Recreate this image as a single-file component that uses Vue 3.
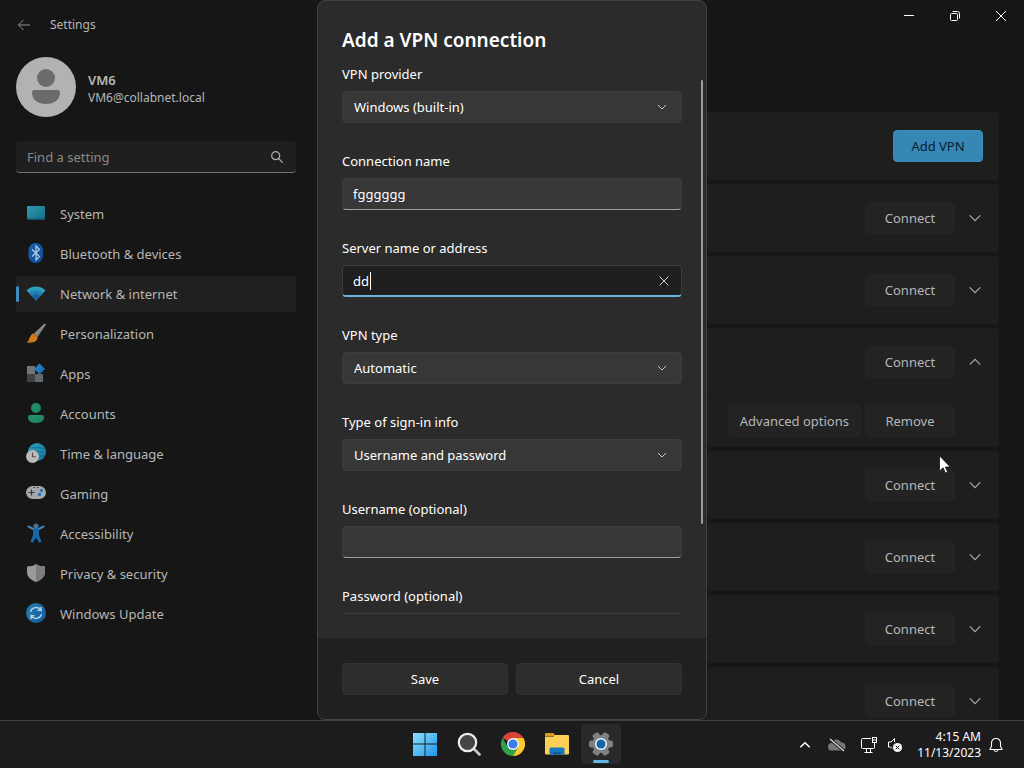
<template>
  <div class="desktop">
    <div class="window">
      <aside class="sidebar">
        <header class="titlebar">
          <button class="back" aria-label="Back">
            <svg width="14" height="14" viewBox="0 0 14 14" fill="none" stroke="#8f8f8f">
              <path d="M6.500 2 1.500 7l5 5M1.500 7H13" />
            </svg>
          </button>
          <span>Settings</span>
        </header>

        <div class="account">
          <svg width="60" height="60" viewBox="0 0 60 60">
            <circle cx="30" cy="30" r="30" fill="#b2b2b2" />
            <circle cx="30" cy="21" r="9" fill="#6b6b6b" />
            <path d="M18.500 33h23q2.500 0 2.500 2.500C44 43 38 47 30 47s-14-4-14-11.500q0-2.500 2.500-2.500z" fill="#6b6b6b" />
          </svg>
          <div>
            <div class="account-name">VM6</div>
            <div class="account-mail">VM6@collabnet.local</div>
          </div>
        </div>

        <div class="search">
          <input v-model="search" type="text" placeholder="Find a setting" aria-label="Find a setting" />
          <svg width="12" height="12" viewBox="0 0 12 12" fill="none" stroke="#b0b0b0" stroke-width="1.200">
            <circle cx="4.700" cy="4.700" r="4" />
            <path d="m7.700 7.700 4 4" />
          </svg>
        </div>

        <nav>
          <a
            v-for="item in navItems"
            :key="item.id"
            href="#"
            class="nav-item"
            :class="{ active: item.id === current }"
            @click.prevent="current = item.id"
          >
            <svg class="nav-icon" width="20" height="20" viewBox="0 0 20 20">
              <defs>
                <linearGradient :id="'g-' + item.id" x1="0" y1="0" x2="1" y2="1">
                  <stop offset="0" :stop-color="item.from" />
                  <stop offset="1" :stop-color="item.to" />
                </linearGradient>
              </defs>
              <g v-if="item.id === 'system'">
                <rect x="1" y="3" width="18" height="14" rx="1" fill="url(#g-system)" />
                <path d="M1 15.500h18V17H1z" fill="#15546b" />
              </g>
              <g v-else-if="item.id === 'bluetooth'">
                <rect x="2.500" y="0" width="14.500" height="20" rx="7.200" fill="url(#g-bluetooth)" />
                <path d="m6 6.500 7.500 7L10 17V3l3.500 3.500-7.500 7" fill="none" stroke="#b9cfe4" stroke-width="1.200" />
              </g>
              <g v-else-if="item.id === 'network'">
                <path d="M0.500 7.500C5 2 15 2 19.500 7.500L10 17.500z" fill="#2d9fbd" />
                <path d="M3.200 10C7 6.200 13 6.200 16.800 10L10 17.500z" fill="#237fb0" />
                <path d="M6 13c2.500-2.200 5.500-2.200 8 0l-4 4.500z" fill="#1a60a4" />
              </g>
              <g v-else-if="item.id === 'personalization'">
                <path d="M18.500 0.500 20 1.500 11.500 14 7.500 11z" fill="url(#g-personalization)" />
                <path d="M7 10.500 11.500 14c.5 4.500-4.500 6.500-11 5.500 2.500-1 2-3 3.500-5.500 1-2 1.500-3 3-3.500z" fill="#cf7a1c" />
              </g>
              <g v-else-if="item.id === 'apps'">
                <path d="M1 3h8v8H1z" fill="#747474" />
                <path d="M1 11h8v8H1z" fill="#3f4347" />
                <path d="M9 11h8v8H9z" fill="#63676b" />
                <path d="m13.500 0.500 5.500 5.500-5.500 5.500L8 6z" fill="url(#g-apps)" />
              </g>
              <g v-else-if="item.id === 'accounts'">
                <circle cx="10" cy="5" r="5" fill="url(#g-accounts)" />
                <path d="M4.500 12h11q2.500 0 2.500 2.300C18 18 15 20 10 20s-8-2-8-5.700Q2 12 4.500 12z" fill="url(#g-accounts)" />
              </g>
              <g v-else-if="item.id === 'time'">
                <circle cx="11" cy="9" r="9" fill="url(#g-time)" />
                <path d="M5 4.500c4 1 8-1 14 1.500M3 8c6-1 10 2 16.500 1M12 12.500c3 1 4 0 6 0" fill="none" stroke="#176c91" stroke-width="1" />
                <circle cx="6.500" cy="13.500" r="6.500" fill="#b8babb" />
                <path d="M6.500 9.500v4.300h3.200" fill="none" stroke="#604846" stroke-width="1.100" />
              </g>
              <g v-else-if="item.id === 'gaming'">
                <rect x="0" y="3" width="20" height="13" rx="6.500" fill="#a5a8ad" />
                <path d="M2.500 9.500h6M5.500 6.500v6" stroke="#35383d" stroke-width="1.200" />
                <circle cx="15.500" cy="7.500" r="1.700" fill="#2c74b5" />
                <circle cx="13.500" cy="11.500" r="1.700" fill="#2c74b5" />
                <path d="M7.500 4.500H9M11 4.500h1.500" stroke="#35383d" />
              </g>
              <g v-else-if="item.id === 'accessibility'">
                <circle cx="10" cy="3" r="2.600" fill="#4d6f8c" />
                <path d="M2.500 3.500 8 6.500h4l5.500-3" fill="none" stroke="#3f83b8" stroke-width="2" stroke-linecap="round" />
                <path d="M7 6h6v6l2.500 6.500-2.300 1.300L10 14.500l-3.200 5.300-2.300-1.300L7 12z" fill="#1668aa" />
              </g>
              <g v-else-if="item.id === 'privacy'">
                <path d="M10 1c2.500 1.800 5.500 2.500 9 2.500V9c0 5-4 8-9 10-5-2-9-5-9-10V3.500C4.500 3.500 7.500 2.800 10 1z" fill="#9a9a9a" />
                <path d="M10 1c2.500 1.800 5.500 2.500 9 2.500V9c0 5-4 8-9 10z" fill="#7d7d7d" />
              </g>
              <g v-else>
                <circle cx="10" cy="10" r="10" fill="url(#g-update)" />
                <path d="M4.500 9c1-5 8-6 10.500-2V4M15 7.300h-3.500M15.500 11c-1 5-8 6-10.500 2v3M5 12.700h3.500" fill="none" stroke="#b5d5e8" stroke-width="1.400" />
              </g>
            </svg>
            {{ item.label }}
          </a>
        </nav>
      </aside>

      <main class="content">
        <section class="card">
          <div class="card-row">
            <button class="btn accent">Add VPN</button>
          </div>
        </section>
        <section v-for="vpn in connections" :key="vpn.id" class="card">
          <div class="card-row">
            <button class="btn">Connect</button>
            <button
              class="expander"
              :class="{ open: vpn.open }"
              :aria-expanded="vpn.open"
              aria-label="Details"
              @click="vpn.open = !vpn.open"
            >
              <svg width="12" height="12" viewBox="0 0 12 12" fill="none" stroke="#a8a8a8" stroke-width="1.200">
                <path d="m0.700 3.300 5.300 5.300 5.300-5.300" />
              </svg>
            </button>
          </div>
          <div v-if="vpn.open" class="card-details">
            <button class="btn">Advanced options</button>
            <button class="btn">Remove</button>
          </div>
        </section>
      </main>

      <div class="captions">
        <button aria-label="Minimize">
          <svg width="12" height="12" viewBox="0 0 12 12" fill="none" stroke="#fff"><path d="M1 5.500h10" /></svg>
        </button>
        <button aria-label="Restore">
          <svg width="12" height="12" viewBox="0 0 12 12" fill="none" stroke="#fff">
            <rect x="1.500" y="3.500" width="7" height="7" rx="1" />
            <path d="M3.500 1.500h5q2 0 2 2v5" />
          </svg>
        </button>
        <button aria-label="Close">
          <svg width="12" height="12" viewBox="0 0 12 12" fill="none" stroke="#fff"><path d="m1 1 10 10M11 1 1 11" /></svg>
        </button>
      </div>

      <form class="dialog" role="dialog" aria-labelledby="dialog-title" @submit.prevent>
        <h1 id="dialog-title">Add a VPN connection</h1>
        <div class="dialog-body">
          <div v-for="field in fields" :key="field.id" class="field">
            <label :for="field.id">{{ field.label }}</label>
            <div class="control">
              <template v-if="field.options">
                <select :id="field.id" v-model="field.value">
                  <option v-for="option in field.options" :key="option">{{ option }}</option>
                </select>
                <svg class="chevron" width="10" height="10" viewBox="0 0 10 10" fill="none" stroke="#c8c8c8">
                  <path d="m1 3 4 4 4-4" />
                </svg>
              </template>
              <template v-else>
                <input
                  :id="field.id"
                  v-model="field.value"
                  :type="field.type || 'text'"
                  :class="{ focused: field.id === focused }"
                  autocomplete="off"
                />
                <template v-if="field.id === focused">
                  <span class="caret"></span>
                  <button type="button" class="clear" aria-label="Clear" @click="field.value = ''">
                    <svg width="10" height="10" viewBox="0 0 10 10" fill="none" stroke="#d0d0d0">
                      <path d="m0.500 0.500 9 9M9.500 0.500l-9 9" />
                    </svg>
                  </button>
                </template>
              </template>
            </div>
          </div>
        </div>
        <span class="scroll-thumb"></span>
        <footer>
          <button type="submit">Save</button>
          <button type="button">Cancel</button>
        </footer>
      </form>
    </div>

    <div class="taskbar">
      <div class="apps">
        <button aria-label="Start">
          <svg width="24" height="24" viewBox="0 0 24 24">
            <defs>
              <linearGradient id="start" x1="0" y1="0" x2="24" y2="24" gradientUnits="userSpaceOnUse">
                <stop offset="0" stop-color="#8fe3fb" />
                <stop offset="1" stop-color="#1e96ea" />
              </linearGradient>
            </defs>
            <path d="M0 1h11.500v10.500H0zM12.500 1H24v10.500H12.500zM0 12.500h11.500V24H0zM12.500 12.500H24V24H12.500z" fill="url(#start)" />
          </svg>
        </button>
        <button aria-label="Search">
          <svg width="24" height="24" viewBox="0 0 24 24" fill="none">
            <path d="m17.500 17.500 5 5" stroke="#c9c9c9" stroke-width="2.600" stroke-linecap="round" />
            <circle cx="10.500" cy="10.500" r="8.700" fill="#454545" stroke="#ededed" stroke-width="2.200" />
          </svg>
        </button>
        <button aria-label="Chrome">
          <svg width="24" height="24" viewBox="0 0 24 24">
            <path d="M12 12 1.600 6A12 12 0 0 1 22.400 6z" fill="#dc4437" />
            <path d="M6.800 15 1.600 6A12 12 0 0 0 12 24l5.200-9z" fill="#2da14c" />
            <path d="M12 6h10.400a12 12 0 0 1-10.400 18l5.200-9z" fill="#fccb2f" />
            <circle cx="12" cy="12" r="6" fill="#f4f7fb" />
            <circle cx="12" cy="12" r="4.600" fill="#3b7ded" />
          </svg>
        </button>
        <button aria-label="File Explorer">
          <svg width="24" height="24" viewBox="0 0 24 24">
            <path d="M0 2q0-1 1-1h7.500l2.500 3H0z" fill="#d99a22" />
            <path d="M0 4.500 8.500 4.500 10.500 3H23q1 0 1 1v17.500q0 1-1 1H1q-1 0-1-1z" fill="#fbd054" />
            <path d="M4.500 22.500V17q0-1.500 1.500-1.500h12q1.500 0 1.500 1.500v5.500z" fill="#1877c5" />
            <path d="M8 22.500V20.300h8v2.200z" fill="#0d5796" />
          </svg>
        </button>
        <button class="running" aria-label="Settings">
          <svg width="24" height="24" viewBox="0 0 24 24">
            <g fill="#7d8286">
              <rect v-for="n in 3" :key="n" x="8.500" y="0" width="7" height="24" rx="2" :transform="`rotate(${n * 60 - 30} 12 12)`" />
              <circle cx="12" cy="12" r="9" />
            </g>
            <circle cx="12" cy="12" r="6" fill="#eef4f9" />
            <circle cx="12" cy="12" r="4.500" fill="#1663ab" />
          </svg>
        </button>
      </div>
      <div class="tray">
        <button aria-label="Show hidden icons">
          <svg width="12" height="12" viewBox="0 0 12 12" fill="none" stroke="#fff" stroke-width="1.500"><path d="m1.300 8.300 4.700-4.600 4.700 4.600" /></svg>
        </button>
        <button class="cloud" aria-label="OneDrive">
          <svg width="18" height="14" viewBox="0 0 18 14">
            <path d="M4 12.500A3.700 3.700 0 0 1 3.700 5 5 5 0 0 1 13 4.500a4 4 0 0 1 1 8z" fill="#777" />
            <path d="m2 1 14 12" stroke="#1c1c1c" stroke-width="3" />
            <path d="m2 1 14 12" stroke="#e0e0e0" stroke-width="1.200" />
          </svg>
        </button>
        <button aria-label="Network">
          <svg width="18" height="18" viewBox="0 0 18 18" fill="none" stroke="#fff">
            <path d="M11 2.500H2.500q-1 0-1 1v8q0 1 1 1h11q1 0 1-1V9M6.500 12.500v3.500M10.500 12.500v3.500M4.500 16.500h8" />
            <rect x="12.500" y="1.500" width="4" height="5" />
            <path d="M14.500 6.500v5M13 4h3" />
          </svg>
        </button>
        <button aria-label="Volume">
          <svg width="16" height="16" viewBox="0 0 16 16" fill="none" stroke="#fff">
            <path d="M7.500 5V1.500L4 5H1.500v5h2L5 11.500" />
            <circle cx="10.500" cy="10.500" r="4.600" fill="#f3f3f3" stroke="none" />
            <path d="m8.800 8.800 3.400 3.400M12.200 8.800l-3.400 3.400" stroke="#1c1c1c" />
          </svg>
        </button>
        <div class="clock">
          <div>4:15 AM</div>
          <div>11/13/2023</div>
        </div>
        <button class="bell" aria-label="Notifications">
          <svg width="14" height="16" viewBox="0 0 14 16" fill="none" stroke="#fff" stroke-width="1.100">
            <path d="M7 1.500c-3 0-4.500 2-4.500 4.500v3L1 12.500h12L11.500 9V6c0-2.500-1.500-4.500-4.500-4.500zM5 12.800c.3 2.200 3.700 2.200 4 0" />
          </svg>
        </button>
      </div>
    </div>

    <svg class="pointer" width="12" height="19" viewBox="0 0 12 19">
      <path d="M0.500 0.800v15.400l3.600-3.400 2.300 5.300 2.300-1-2.300-5.100h4.900z" fill="#fff" stroke="#111" stroke-width="0.800" />
    </svg>
  </div>
</template>

<script setup>
import { ref } from 'vue'

const search = ref('')
const current = ref('network')
const focused = ref('server')

const navItems = [
  { id: 'system', label: 'System', from: '#2b9db4', to: '#176b85' },
  { id: 'bluetooth', label: 'Bluetooth & devices', from: '#155fae', to: '#0f4c93' },
  { id: 'network', label: 'Network & internet', from: '#2d9fbd', to: '#1a60a4' },
  { id: 'personalization', label: 'Personalization', from: '#a5a5a5', to: '#6a6a6a' },
  { id: 'apps', label: 'Apps', from: '#2f8ed0', to: '#1560a8' },
  { id: 'accounts', label: 'Accounts', from: '#25936f', to: '#1b8060' },
  { id: 'time', label: 'Time & language', from: '#2ea5bd', to: '#1a6f9c' },
  { id: 'gaming', label: 'Gaming', from: '#aaa', to: '#888' },
  { id: 'accessibility', label: 'Accessibility', from: '#2272b2', to: '#145c9b' },
  { id: 'privacy', label: 'Privacy & security', from: '#999', to: '#777' },
  { id: 'update', label: 'Windows Update', from: '#2280ac', to: '#1557a0' }
]

const connections = ref([
  { id: 1, open: false },
  { id: 2, open: false },
  { id: 3, open: true },
  { id: 4, open: false },
  { id: 5, open: false },
  { id: 6, open: false },
  { id: 7, open: false }
])

const fields = ref([
  { id: 'provider', label: 'VPN provider', value: 'Windows (built-in)', options: ['Windows (built-in)'] },
  { id: 'name', label: 'Connection name', value: 'fgggggg' },
  { id: 'server', label: 'Server name or address', value: 'dd' },
  { id: 'type', label: 'VPN type', value: 'Automatic', options: ['Automatic'] },
  { id: 'signin', label: 'Type of sign-in info', value: 'Username and password', options: ['Username and password'] },
  { id: 'username', label: 'Username (optional)', value: '' },
  { id: 'password', label: 'Password (optional)', value: '', type: 'password' }
])
</script>

<style>
body {
  margin: 0;
  background: #161616;
}
</style>

<style scoped>
.desktop {
  position: relative;
  display: flex;
  flex-direction: column;
  height: 100vh;
  overflow: hidden;
  color: #b6b6b6;
  font-family: 'Segoe UI', 'Noto Sans', 'Open Sans', sans-serif;
  font-size: 13px;
  line-height: 20px;
}

.desktop * {
  box-sizing: border-box;
}

button,
input,
select {
  margin: 0;
  padding: 0;
  border: 0;
  outline: 0;
  background: none;
  color: inherit;
  font: inherit;
}

svg {
  display: block;
  flex: none;
}

.window {
  position: relative;
  display: flex;
  flex: 1;
  min-height: 0;
  overflow: hidden;
  background: #161616;
}

.sidebar {
  flex: none;
  width: 320px;
  padding: 0 24px 0 16px;
}

.titlebar {
  display: flex;
  align-items: center;
  gap: 18px;
  height: 49px;
  font-size: 12px;
}

.back {
  display: grid;
  place-items: center;
  width: 16px;
  height: 32px;
}

.account {
  display: flex;
  align-items: center;
  gap: 12px;
  padding-top: 8px;
}

.account-name {
  padding-top: 3px;
  font-weight: 600;
  line-height: 18px;
}

.account-mail {
  font-size: 12px;
  line-height: 18px;
}

.search {
  display: flex;
  align-items: center;
  height: 32px;
  margin-top: 24px;
  padding: 0 13px 0 11px;
  border-bottom: 1px solid #757575;
  border-radius: 4px;
  background: #1f1f1f;
}

.search input {
  flex: 1;
  min-width: 0;
}

.search input::placeholder {
  color: #8a8a8a;
  opacity: 1;
}

nav {
  display: flex;
  flex-direction: column;
  gap: 4px;
  margin-top: 23px;
}

.nav-item {
  position: relative;
  display: flex;
  align-items: center;
  gap: 14px;
  height: 36px;
  padding: 0 10px;
  border-radius: 4px;
  color: inherit;
  text-decoration: none;
}

.nav-item.active {
  background: #202020;
}

.nav-item.active::before {
  content: '';
  position: absolute;
  left: 0;
  width: 3px;
  height: 16px;
  border-radius: 2px;
  background: #3c8cbe;
}

.nav-icon {
  margin-bottom: 2px;
}

.content {
  display: flex;
  flex: 1;
  flex-direction: column;
  gap: 4px;
  min-width: 0;
  padding: 112px 25px 0 0;
}

.card {
  flex: none;
  border-radius: 4px;
  background: #1e1e1e;
}

.card-row {
  display: flex;
  align-items: center;
  justify-content: flex-end;
  height: 68px;
  padding-right: 16px;
}

.card-details {
  display: flex;
  justify-content: flex-end;
  gap: 4px;
  padding: 8px 44px 10px;
  border-top: 1px solid #1a1a1a;
}

.btn {
  min-width: 90px;
  height: 32px;
  padding: 0 11px;
  border: 1px solid #252525;
  border-radius: 4px;
  background: #232323;
}

.btn.accent {
  border-color: #3a8cba;
  background: #3787b5;
  color: #08202f;
}

.expander {
  display: grid;
  place-items: center;
  width: 16px;
  height: 32px;
  margin-left: 12px;
}

.expander.open svg {
  transform: rotate(180deg);
}

.captions {
  position: absolute;
  top: 0;
  right: 0;
  display: flex;
}

.captions button {
  display: grid;
  place-items: center;
  width: 46px;
  height: 32px;
}

.dialog {
  position: absolute;
  top: 0;
  bottom: 0;
  left: 50%;
  display: flex;
  flex-direction: column;
  width: 390px;
  margin-left: -195px;
  overflow: hidden;
  border: 1px solid #424242;
  border-radius: 8px;
  background: #2b2b2b;
  color: #fff;
}

.dialog h1 {
  margin: 25px 24px 10px;
  font-size: 19px;
  font-weight: 600;
  line-height: 28px;
}

.dialog-body {
  display: flex;
  flex: 1;
  flex-direction: column;
  gap: 28px;
  min-height: 0;
  margin-bottom: 24px;
  padding: 0 24px;
  overflow: hidden;
}

.field {
  display: flex;
  flex: none;
  flex-direction: column;
  gap: 7px;
}

.control {
  position: relative;
}

.control select,
.control input {
  display: block;
  width: 100%;
  height: 32px;
  padding: 0 10px;
  border: 1px solid #3d3d3d;
  border-radius: 4px;
  background: #373737;
}

.control select {
  padding: 0 32px 0 11px;
  appearance: none;
}

.control input {
  border-bottom-color: #9e9e9e;
}

.control input.focused {
  border-bottom: 2px solid #6ab5e0;
  background: #1f1f1f;
}

.chevron {
  position: absolute;
  top: 11px;
  right: 15px;
  pointer-events: none;
}

.caret {
  position: absolute;
  top: 7px;
  left: 28px;
  width: 1px;
  height: 18px;
  background: #fff;
}

.clear {
  position: absolute;
  top: 4px;
  right: 6px;
  display: grid;
  place-items: center;
  width: 24px;
  height: 24px;
}

.scroll-thumb {
  position: absolute;
  top: 79px;
  right: 3px;
  width: 2px;
  height: 444px;
  border-radius: 1px;
  background: #9b9b9b;
}

.dialog footer {
  display: grid;
  grid-template-columns: 1fr 1fr;
  gap: 8px;
  padding: 24px;
  border-top: 1px solid #1d1d1d;
  background: #202020;
}

.dialog footer button {
  height: 32px;
  border: 1px solid #323232;
  border-radius: 4px;
  background: #2d2d2d;
}

.taskbar {
  display: grid;
  flex: none;
  grid-template-columns: 1fr auto 1fr;
  height: 48px;
  border-top: 1px solid #3e3e3e;
  background: #1c1c1c;
  color: #fff;
}

.taskbar button {
  display: grid;
  place-items: center;
}

.apps {
  display: flex;
  grid-column: 2;
  gap: 4px;
  align-items: center;
  padding: 0 0 2px 1px;
}

.apps button {
  position: relative;
  width: 40px;
  height: 40px;
  border-radius: 4px;
}

.apps .running {
  background: #292929;
}

.running::after {
  content: '';
  position: absolute;
  bottom: 1px;
  width: 16px;
  height: 3px;
  border-radius: 2px;
  background: #60b8e4;
}

.tray {
  display: flex;
  align-items: center;
  justify-content: flex-end;
  padding-right: 20px;
}

.tray button {
  width: 26px;
  height: 40px;
}

.tray .cloud {
  width: 38px;
}

.clock {
  padding: 0 7px 0 9px;
  font-size: 12px;
  line-height: 16px;
  text-align: right;
}

.tray .bell {
  width: 16px;
}

.pointer {
  position: absolute;
  top: 455px;
  left: 939px;
  pointer-events: none;
}
</style>
